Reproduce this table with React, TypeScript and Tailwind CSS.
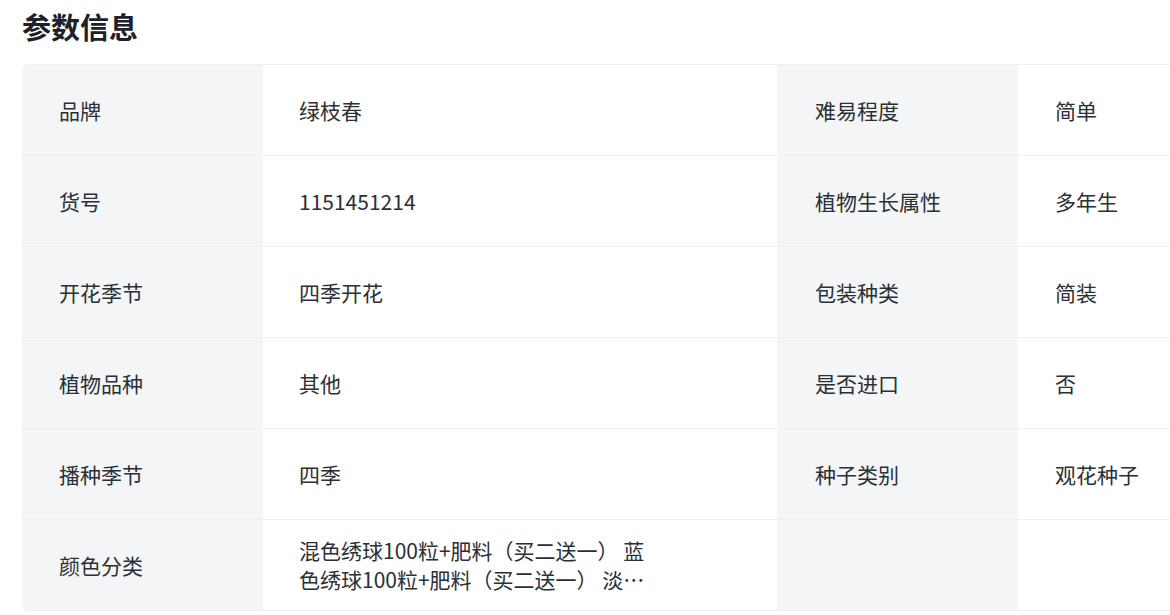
import React from "react";

const rows: [string, string, string, string][] = [
  ["品牌", "绿枝春", "难易程度", "简单"],
  ["货号", "1151451214", "植物生长属性", "多年生"],
  ["开花季节", "四季开花", "包装种类", "简装"],
  ["植物品种", "其他", "是否进口", "否"],
  ["播种季节", "四季", "种子类别", "观花种子"],
  [
    "颜色分类",
    "混色绣球100粒+肥料（买二送一） 蓝色绣球100粒+肥料（买二送一） 淡紫色绣球100粒+肥料（买二送一） 粉色绣球100粒+肥料（买二送一）",
    "",
    "",
  ],
];

export default function App() {
  return (
    <div
      className="w-[1170px] h-[615px] overflow-hidden bg-white pl-[22px]"
      style={{ fontFamily: '"Noto Sans CJK SC", "Noto Sans", sans-serif' }}
    >
      <h2 className="pt-[6px] text-[29px] leading-[40px] font-bold text-[#1d2129]">参数信息</h2>
      <div className="mt-[18px] w-[1510px] rounded-l-[6px] overflow-hidden border-t border-[#eff0f2]">
        {rows.map((r, i) => (
          <div
            key={i}
            className="grid grid-cols-[241px_514px_241px_514px] h-[91px] border-b border-[#eff0f2] text-[21px] leading-[29px] text-[#2b2f36]"
          >
            <div className="bg-[#f4f5f7] flex items-center pl-[37px]">{r[0]}</div>
            <div className="bg-white flex items-center pl-[36px]">
              <span className="w-[355px] line-clamp-2 break-all">{r[1]}</span>
            </div>
            <div className="bg-[#f4f5f7] flex items-center pl-[38px]">{r[2]}</div>
            <div className="bg-white flex items-center pl-[37px]">{r[3]}</div>
          </div>
        ))}
      </div>
    </div>
  );
}
